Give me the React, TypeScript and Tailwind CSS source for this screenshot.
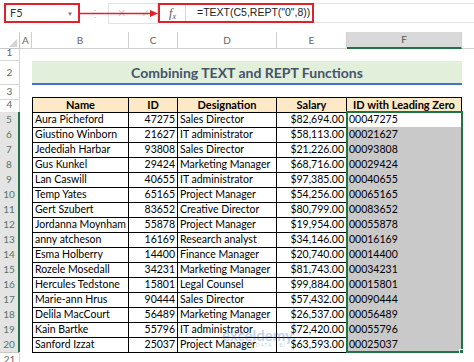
const data: [string, string, string, string][] = [
  ["Aura Picheford", "47275", "Sales Director", "$82,694.00"],
  ["Giustino Winborn", "21627", "IT administrator", "$58,113.00"],
  ["Jedediah Harbar", "93808", "Sales Director", "$21,226.00"],
  ["Gus Kunkel", "29424", "Marketing Manager", "$68,716.00"],
  ["Lan Caswill", "40655", "IT administrator", "$97,385.00"],
  ["Temp Yates", "65165", "Project Manager", "$54,256.00"],
  ["Gert Szubert", "83652", "Creative Director", "$80,799.00"],
  ["Jordanna Moynham", "55878", "Project Manager", "$19,954.00"],
  ["anny atcheson", "16169", "Research analyst", "$34,146.00"],
  ["Esma Holberry", "14400", "Finance Manager", "$20,740.00"],
  ["Rozele Mosedall", "34231", "Marketing Manager", "$81,743.00"],
  ["Hercules Tedstone", "15801", "Legal Counsel", "$99,884.00"],
  ["Marie-ann Hrus", "90444", "Sales Director", "$57,432.00"],
  ["Delila MacCourt", "56489", "Marketing Manager", "$26,537.00"],
  ["Kain Bartke", "55796", "IT administrator", "$72,420.00"],
  ["Sanford Izzat", "25037", "Project Manager", "$63,593.00"],
];

const grid = "grid grid-cols-[20px_12px_97px_49px_99px_70px_115px_12px]";
const label = "flex items-center justify-center border-r border-b border-[#d6d6d6] text-[10px] text-[#666]";
const selLabel =
  "flex items-center justify-center border-r-2 border-r-[#217346] border-b border-b-[#c6c6c6] bg-[#e4e4e4] text-[10px] text-[#5a7564]";
const cell = "flex items-center border-r border-b border-black px-[2px] whitespace-nowrap overflow-hidden";

function Row({ n, h, children }: { n: number; h: string; children?: React.ReactNode }) {
  return (
    <div className={`${grid} ${h}`}>
      <div className={n >= 5 && n <= 20 ? selLabel : label}>{n}</div>
      {children}
    </div>
  );
}

export default function App() {
  return (
    <div className="relative h-[362px] w-[474px] overflow-hidden bg-white font-['Lato','Noto_Sans',sans-serif] text-black">
      {/* formula bar */}
      <div className="flex h-[32px] items-start pt-[3px]">
        <div className="ml-[4px] flex h-[20px] w-[76px] items-center justify-between border-2 border-[#e0202a] pl-[4px] pr-[5px] text-[11px] text-[#333]">
          <span>F5</span>
          <span className="text-[6px] text-[#777]">▼</span>
        </div>
        <div className="relative flex h-[20px] w-[78px] items-center">
          <span className="ml-[10px] text-[10px] text-[#c4c4c4]">⋮</span>
          <div className="ml-[8px] flex h-[21px] w-[54px] items-center justify-around border border-[#e2e2e2] text-[11px] text-[#cfcfcf]">
            <span>✕</span>
            <span>✓</span>
          </div>
          <svg className="absolute left-0 top-0" width="78" height="20" viewBox="0 0 78 20">
            <line x1="0" y1="10.5" x2="72" y2="10.5" stroke="#e0202a" strokeWidth="1.5" />
            <polygon points="70,7 78,10.5 70,14" fill="#e0202a" />
          </svg>
        </div>
        <div className="flex h-[20px] flex-1 items-stretch">
          <div className="flex w-[156px] items-center border-2 border-[#e0202a]">
            <span className="w-[25px] text-center font-['Liberation_Serif',serif] text-[12px] italic text-[#555]">
              f<sub className="text-[8px]">x</sub>
            </span>
            <span className="h-full border-l border-[#d8d8d8]" />
            <span className="pl-[11px] font-['Liberation_Sans',sans-serif] text-[10.5px] text-[#222]">
              =TEXT(C5,REPT("0",8))
            </span>
          </div>
          <div className="flex-1 border-y border-[#e2e2e2]" />
        </div>
      </div>

      {/* sheet */}
      <div className="relative">
        <div className={`${grid} h-[13px] text-[10px] text-[#666]`}>
          <div className="relative border-r border-b border-[#c8c8c8]">
            <svg className="absolute bottom-[1px] right-[2px]" width="8" height="8" viewBox="0 0 8 8">
              <polygon points="8,0 8,8 0,8" fill="#d4d4d4" />
            </svg>
          </div>
          {["A", "B", "C", "D", "E"].map((c) => (
            <div key={c} className="flex items-center justify-center border-r border-b border-[#d0d0d0]">
              {c}
            </div>
          ))}
          <div className="flex items-center justify-center border-r border-b-2 border-r-[#d0d0d0] border-b-[#217346] bg-[#d9d9d9] text-[#555]">
            F
          </div>
          <div className="border-b border-[#d0d0d0]" />
        </div>

        <Row n={1} h="h-[16px]" />
        <Row n={2} h="h-[23px]">
          <div />
          <div className="col-span-5 flex items-center justify-center border-b-2 border-[#4472c4] bg-[#e2efda] pt-[1px] text-[14px] font-bold text-[#44546a]">
            Combining TEXT and REPT Functions
          </div>
        </Row>
        <Row n={3} h="h-[13px]" />
        <Row n={4} h="h-[15px]">
          <div />
          {["Name", "ID", "Designation", "Salary", "ID with Leading Zero"].map((t, i) => (
            <div
              key={t}
              className={`${cell} justify-center border-t bg-[#fde9c6] text-[11px] font-bold ${i === 0 ? "border-l" : ""}`}
            >
              {t}
            </div>
          ))}
        </Row>
        {data.map(([name, id, des, sal], i) => (
          <Row key={name} n={i + 5} h="h-[15px]">
            <div />
            <div className={`${cell} border-l text-[10.5px]`}>{name}</div>
            <div className={`${cell} justify-end text-[10.5px]`}>{id}</div>
            <div className={`${cell} text-[10.5px]`}>{des}</div>
            <div className={`${cell} justify-end text-[10.5px]`}>{sal}</div>
            <div className={`${cell} text-[10.5px] ${i === 0 ? "bg-white" : "bg-[#c9c9c9]"}`}>{id.padStart(8, "0")}</div>
          </Row>
        ))}
        <Row n={21} h="h-[15px]" />

        {/* selection F5:F20 */}
        <div className="absolute left-[346px] top-[79px] h-[242px] w-[117px] border-2 border-[#217346]">
          <div className="absolute -bottom-[3px] -right-[3px] h-[5px] w-[5px] border border-white bg-[#217346]" />
        </div>

        {/* watermark */}
        <div className="pointer-events-none absolute left-[222px] top-[296px] flex flex-col items-center leading-none opacity-30">
          <span className="text-[15px] font-bold text-[#3b6fc2]">exceldemy</span>
          <span className="text-[5px] tracking-[1px] text-[#3b6fc2]">EXCEL · DATA · BI</span>
        </div>
      </div>
    </div>
  );
}
